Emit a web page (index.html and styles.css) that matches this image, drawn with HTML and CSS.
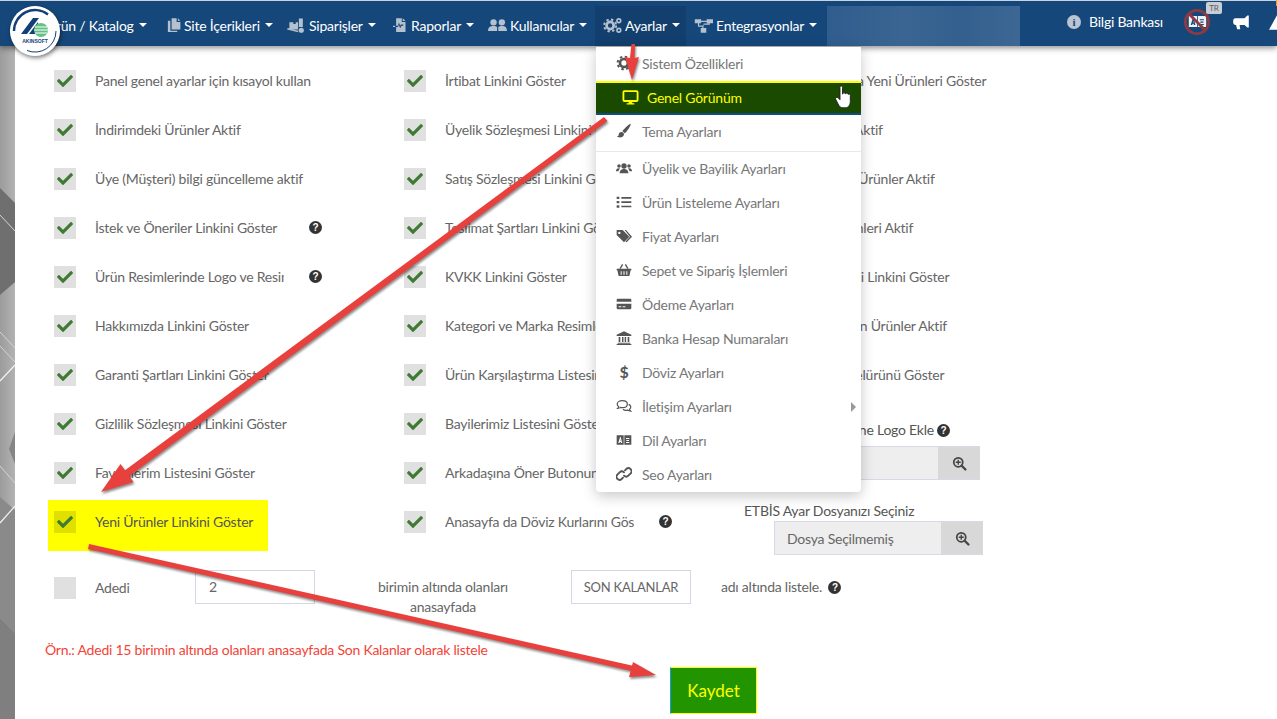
FILE: index.html
```html
<!DOCTYPE html>
<html lang="tr">
<head>
<meta charset="utf-8">
<title>Genel Görünüm</title>
<link rel="stylesheet" href="styles.css">
</head>
<body>
<svg class="defs" width="0" height="0" aria-hidden="true">
  <symbol id="i-check" viewBox="0 0 512 512"><path d="M173.898 439.404l-166.4-166.4c-9.997-9.997-9.997-26.206 0-36.204l36.203-36.204c9.997-9.998 26.207-9.998 36.204 0L192 312.69 432.095 72.596c9.997-9.997 26.207-9.997 36.204 0l36.203 36.204c9.997 9.997 9.997 26.206 0 36.204l-294.4 294.401c-9.998 9.997-26.207 9.997-36.204-.001z"/></symbol>
  <symbol id="i-gear" viewBox="0 0 24 24"><circle cx="12" cy="12" r="6" fill="none" stroke="currentColor" stroke-width="4"/><circle cx="12" cy="12" r="9.5" fill="none" stroke="currentColor" stroke-width="3" stroke-dasharray="3.7 3.76"/></symbol>
  <symbol id="i-gears" viewBox="0 0 24 24"><circle cx="9" cy="12" r="4.5" fill="none" stroke="currentColor" stroke-width="3.4"/><circle cx="9" cy="12" r="7.6" fill="none" stroke="currentColor" stroke-width="2.4" stroke-dasharray="3 3"/><circle cx="20" cy="6" r="2.4" fill="none" stroke="currentColor" stroke-width="2"/><circle cx="20" cy="18" r="2.4" fill="none" stroke="currentColor" stroke-width="2"/></symbol>
  <symbol id="i-monitor" viewBox="0 0 24 24"><rect x="2" y="3" width="20" height="14" rx="1.5" fill="none" stroke="currentColor" stroke-width="2.6"/><path d="M9.5 17h5v3h3v2h-11v-2h3z"/></symbol>
  <symbol id="i-brush" viewBox="0 0 24 24"><path d="M22 1c-2 .2-9 6.500-12.500 11l3.500 3.500C17 12 22.500 4 22 1z"/><path d="M8.500 13.500c-3 0-4.500 2-4.500 4 0 1.500-1 2.500-3 2.500 2 2.500 10.500 3 11-3 0-2-1.500-3.500-3.500-3.500z"/></symbol>
  <symbol id="i-users" viewBox="0 0 24 24"><circle cx="12" cy="9" r="4"/><path d="M5.500 20c0-5 3-6.500 6.500-6.500s6.500 1.500 6.500 6.500z"/><circle cx="4.500" cy="9" r="2.700"/><circle cx="19.500" cy="9" r="2.700"/><path d="M0 17c0-3 1.500-4.500 4-4.500 1 0 1.500.3 2 .6-1.500 1-2 2.500-2.200 3.900zM24 17c0-3-1.500-4.500-4-4.500-1 0-1.500.3-2 .6 1.500 1 2 2.500 2.200 3.900z"/></symbol>
  <symbol id="i-users2" viewBox="0 0 24 24"><circle cx="7" cy="8" r="4"/><circle cx="17.500" cy="8" r="4"/><path d="M0 19c0-5 3-6.500 7-6.500 2 0 3.500.5 4.500 1.500v5zM13 14c1-1 2.500-1.500 4.500-1.500 4 0 6.500 1.500 6.500 6.500H13z"/></symbol>
  <symbol id="i-list" viewBox="0 0 24 24"><path d="M1 4h4v3.500H1zM8 4.500h15V7H8zM1 10.500h4V14H1zM8 11h15v2.500H8zM1 17h4v3.500H1zM8 17.500h15V20H8z"/></symbol>
  <symbol id="i-tags" viewBox="0 0 24 24"><path fill-rule="evenodd" d="M1 3h9l10 10-8 8.500-11-11zM5 5.500a1.800 1.800 0 1 0 .01 0z"/><path d="M13 3h2l9 10-8 8.500-1.800-1.300 6.800-7.200z"/></symbol>
  <symbol id="i-basket" viewBox="0 0 24 24"><path fill-rule="evenodd" d="M1 10h22v2.500h-1L20 21H4L2 12.500H1zM7 14v5h1.500v-5zM11.200 14v5h1.600v-5zM15.500 14v5H17v-5z"/><path d="M5 10l4-7 1.800 1-3.500 6zM19 10l-4-7-1.800 1 3.500 6z"/></symbol>
  <symbol id="i-card" viewBox="0 0 24 24"><path fill-rule="evenodd" d="M3 4h18a2 2 0 0 1 2 2v2.500H1V6a2 2 0 0 1 2-2zM1 11.500h22V18a2 2 0 0 1-2 2H3a2 2 0 0 1-2-2zM4 15.500v1.500h4v-1.500zM10 15.500v1.500h4v-1.500z"/></symbol>
  <symbol id="i-bank" viewBox="0 0 24 24"><path d="M12 2l11 5v2H1V7zM4 10.500h2.500V18H4zM9 10.500h2.200V18H9zM13 10.500h2.200V18H13zM17.500 10.500H20V18h-2.500zM2.500 19h19v1.500h-19zM1 21h22v1.500H1z"/></symbol>
  <symbol id="i-comments" viewBox="0 0 24 24"><g fill="none" stroke="currentColor" stroke-width="1.800"><path d="M9.500 4c4.400 0 7.500 2.200 7.500 5.200s-3.100 5.300-7.500 5.300c-1 0-1.900-.1-2.700-.4-1.200 1-2.800 1.500-4.300 1.500.9-.8 1.400-1.900 1.500-2.900C2.700 11.800 1.800 10.600 1.800 9.200 1.800 6.200 5 4 9.500 4z"/><path d="M19 9.500c2 .8 3.200 2.300 3.200 4 0 1.300-.7 2.500-1.900 3.300.1 1 .6 2 1.500 2.800-1.500 0-3-.5-4.200-1.500-2.600.8-5.500.2-7.100-1.300"/></g></symbol>
  <symbol id="i-lang" viewBox="0 0 24 24"><path fill-rule="evenodd" d="M1 5h10.500v14H1zM6.200 7.500L3.400 16.500h1.900l.5-1.600h1.200l.5 1.600h1.900L7 7.500zM6.100 13.300l.5-2 .5 2z"/><path fill-rule="evenodd" d="M12.500 5H23v14H12.500zM15 9v1.500h5V9zM15.500 12v1.500h4V12zM15 15v1.500h5V15z"/></symbol>
  <symbol id="i-link" viewBox="0 0 24 24"><g fill="none" stroke="currentColor" stroke-width="2.800" stroke-linecap="round"><path d="M13.500 6.500l2-2a4.600 4.600 0 0 1 6.500 6.500l-3.500 3.500a4.600 4.600 0 0 1-6.500 0"/><path d="M10.500 17.500l-2 2A4.600 4.600 0 0 1 2 13l3.500-3.500a4.600 4.600 0 0 1 6.500 0"/></g></symbol>
  <symbol id="i-search" viewBox="0 0 24 24"><circle cx="10" cy="10" r="7.200" fill="none" stroke="currentColor" stroke-width="2.800"/><path d="M15.500 15.500l6 6" stroke="currentColor" stroke-width="3.600" stroke-linecap="round"/><path d="M6 10h8M10 6v8" stroke="currentColor" stroke-width="2.200"/></symbol>
  <symbol id="i-files" viewBox="0 0 24 24"><path d="M9 1h8v6h6v12H9z"/><path d="M19 1l4 4h-4z"/><path d="M7 5v16h11v2H3V5z"/></symbol>
  <symbol id="i-truck" viewBox="0 0 24 24"><path d="M3 8h5v2h3V8h3v9H3z"/><path d="M15 3h5v11h-5zM0 17l1-2 13 3.500v2L0 17z"/><circle cx="18" cy="18" r="3.300"/></symbol>
  <symbol id="i-report" viewBox="0 0 24 24"><path fill-rule="evenodd" d="M5 1h9v6h6v16H5v-8h3l1.500-3 2 5 2-4h3v-2h-4l-1 2-2-5L8 13H5z"/><path d="M15.500 1L20 5.500h-4.500zM0 13h3.500v2H0z"/></symbol>
  <symbol id="i-sitemap" viewBox="0 0 24 24"><path d="M1 4h8v5H1zM16 4h8v5h-8zM8.500 15h7v6h-7zM9 6h7v1.500H9zM5 9h1.500v3H12v3h-1.500v-1.500H5zM12 9.500h6.500V9h1.500v2h-7.500v1.500H12z"/></symbol>
  <symbol id="i-mega" viewBox="0 0 24 24"><path d="M21 2h2v17h-2l-4-3.500H10l1 6H6.500L5 15.500H4a3 3 0 0 1-3-3V9a3 3 0 0 1 3-3h13z"/></symbol>
</svg>

<header class="navbar">
  <div class="logo">
    <svg class="logo-art" viewBox="0 0 50 50">
      <circle cx="25" cy="25" r="24.500" fill="#fff"/>
      <path d="M4 25A21 21 0 0 1 38 8.500" fill="none" stroke="#123f78" stroke-width="2.400"/>
      <path d="M46 25A21 21 0 0 1 17 44.500" fill="none" stroke="#123f78" stroke-width="1"/>
      <path d="M11 28L23 12h6L17 28zM19 28l9-12v12z" fill="#123f78"/>
      <circle cx="31" cy="24" r="7" fill="#63c184"/>
      <path d="M25 21h12M24 24h14M25 27h12" stroke="#fff" stroke-width="1"/>
      <text class="logo-text" x="25" y="37" text-anchor="middle">AKINSOFT</text>
    </svg>
  </div>
  <nav class="menu">
    <div class="menu-item"><span>Ürün / Katalog</span><i class="caret"></i></div>
    <div class="menu-item"><svg class="nav-ico"><use href="#i-files"/></svg><span>Site İçerikleri</span><i class="caret"></i></div>
    <div class="menu-item"><svg class="nav-ico wide"><use href="#i-truck"/></svg><span>Siparişler</span><i class="caret"></i></div>
    <div class="menu-item"><svg class="nav-ico"><use href="#i-report"/></svg><span>Raporlar</span><i class="caret"></i></div>
    <div class="menu-item"><svg class="nav-ico wide"><use href="#i-users2"/></svg><span>Kullanıcılar</span><i class="caret"></i></div>
    <div class="menu-item active"><svg class="nav-ico wide"><use href="#i-gears"/></svg><span>Ayarlar</span><i class="caret"></i>
      <div class="dropdown">
        <a class="dd-item"><svg class="dd-ico"><use href="#i-gear"/></svg>Sistem Özellikleri</a>
        <a class="dd-item current"><svg class="dd-ico"><use href="#i-monitor"/></svg>Genel Görünüm
          <svg class="hand" viewBox="0 0 16 24"><path d="M5 2.200c0-1.600 2.500-1.600 2.500 0V9l.5-.2c0-1.500 2.300-1.500 2.300 0l.4.200c.2-1.300 2.200-1.200 2.300.2l.3.300c.4-.8 2-.4 2 .8v6c0 3-1.500 6.500-5 6.500H8c-3 0-3.500-1.500-5-4L.8 14.500c-.8-1.500 1-3 2.500-1.500L5 14.800z" fill="#fff" stroke="#222" stroke-width=".9"/></svg>
        </a>
        <a class="dd-item"><svg class="dd-ico"><use href="#i-brush"/></svg>Tema Ayarları</a>
        <div class="dd-divider"></div>
        <a class="dd-item"><svg class="dd-ico"><use href="#i-users"/></svg>Üyelik ve Bayilik Ayarları</a>
        <a class="dd-item"><svg class="dd-ico"><use href="#i-list"/></svg>Ürün Listeleme Ayarları</a>
        <a class="dd-item"><svg class="dd-ico"><use href="#i-tags"/></svg>Fiyat Ayarları</a>
        <a class="dd-item"><svg class="dd-ico"><use href="#i-basket"/></svg>Sepet ve Sipariş İşlemleri</a>
        <a class="dd-item"><svg class="dd-ico"><use href="#i-card"/></svg>Ödeme Ayarları</a>
        <a class="dd-item"><svg class="dd-ico"><use href="#i-bank"/></svg>Banka Hesap Numaraları</a>
        <a class="dd-item"><b class="dd-ico dollar">$</b>Döviz Ayarları</a>
        <a class="dd-item has-sub"><svg class="dd-ico"><use href="#i-comments"/></svg>İletişim Ayarları<i class="sub-caret"></i></a>
        <a class="dd-item"><svg class="dd-ico"><use href="#i-lang"/></svg>Dil Ayarları</a>
        <a class="dd-item"><svg class="dd-ico"><use href="#i-link"/></svg>Seo Ayarları</a>
      </div>
    </div>
    <div class="menu-item"><svg class="nav-ico wide"><use href="#i-sitemap"/></svg><span>Entegrasyonlar</span><i class="caret"></i></div>
    <div class="blurred"></div>
  </nav>
  <div class="nav-right">
    <span class="info-dot">i</span><span class="kb">Bilgi Bankası</span>
    <div class="lang-off">
      <svg class="lang-ico"><use href="#i-lang"/></svg>
      <svg class="lang-ban" viewBox="0 0 30 30"><circle cx="15" cy="15" r="12.500" fill="none" stroke="#8c3b42" stroke-width="3"/><path d="M6 6l18 18" stroke="#8c3b42" stroke-width="3"/></svg>
      <span class="tr-badge">TR</span>
    </div>
    <svg class="mega"><use href="#i-mega"/></svg>
    <div class="warn"><svg class="warn-ico" viewBox="0 0 20 18"><path d="M10 0l10 18H0z" fill="#fff"/></svg></div>
  </div>
</header>

<div class="page">
  <aside class="strip">
    <svg class="strip-art" viewBox="0 46 15 673" preserveAspectRatio="none">
      <polygon points="0,188 15,203 15,282 0,295" fill="#6f6f6f"/>
      <polygon points="0,497 15,510 15,633 0,618" fill="#8a8a8a"/>
      <polygon points="0,618 15,633 15,719 0,719" fill="#7f7f7f"/>
      <polygon points="15,432 9,449 15,464" fill="#858585"/>
      <path d="M0 215L15 231M0 332L15 348M0 346L15 362M0 466L15 483" stroke="#d4d4d4" stroke-width="1"/>
      <path d="M0 381L15 365M0 523L15 506" stroke="#f2f2f2" stroke-width="1.200"/>
    </svg>
  </aside>
  <main class="panel">
    <div class="columns">
      <section class="col">
        <div class="row"><span class="cb on"><svg><use href="#i-check"/></svg></span><label>Panel genel ayarlar için kısayol kullan</label></div>
        <div class="row"><span class="cb on"><svg><use href="#i-check"/></svg></span><label>İndirimdeki Ürünler Aktif</label></div>
        <div class="row"><span class="cb on"><svg><use href="#i-check"/></svg></span><label>Üye (Müşteri) bilgi güncelleme aktif</label></div>
        <div class="row"><span class="cb on"><svg><use href="#i-check"/></svg></span><label class="clip">İstek ve Öneriler Linkini Göster</label><span class="help">?</span></div>
        <div class="row"><span class="cb on"><svg><use href="#i-check"/></svg></span><label class="clip">Ürün Resimlerinde Logo ve Resim Ekle</label><span class="help">?</span></div>
        <div class="row"><span class="cb on"><svg><use href="#i-check"/></svg></span><label>Hakkımızda Linkini Göster</label></div>
        <div class="row"><span class="cb on"><svg><use href="#i-check"/></svg></span><label>Garanti Şartları Linkini Göster</label></div>
        <div class="row"><span class="cb on"><svg><use href="#i-check"/></svg></span><label>Gizlilik Sözleşmesi Linkini Göster</label></div>
        <div class="row"><span class="cb on"><svg><use href="#i-check"/></svg></span><label>Favorilerim Listesini Göster</label></div>
        <div class="row marked"><span class="cb on"><svg><use href="#i-check"/></svg></span><label>Yeni Ürünler Linkini Göster</label></div>
      </section>
      <section class="col">
        <div class="row"><span class="cb on"><svg><use href="#i-check"/></svg></span><label>İrtibat Linkini Göster</label></div>
        <div class="row"><span class="cb on"><svg><use href="#i-check"/></svg></span><label>Üyelik Sözleşmesi Linkini Göster</label></div>
        <div class="row"><span class="cb on"><svg><use href="#i-check"/></svg></span><label>Satış Sözleşmesi Linkini Göster</label></div>
        <div class="row"><span class="cb on"><svg><use href="#i-check"/></svg></span><label>Teslimat Şartları Linkini Göster</label></div>
        <div class="row"><span class="cb on"><svg><use href="#i-check"/></svg></span><label>KVKK Linkini Göster</label></div>
        <div class="row"><span class="cb on"><svg><use href="#i-check"/></svg></span><label>Kategori ve Marka Resimleri Göster</label></div>
        <div class="row"><span class="cb on"><svg><use href="#i-check"/></svg></span><label>Ürün Karşılaştırma Listesini Göster</label></div>
        <div class="row"><span class="cb on"><svg><use href="#i-check"/></svg></span><label>Bayilerimiz Listesini Göster</label></div>
        <div class="row"><span class="cb on"><svg><use href="#i-check"/></svg></span><label>Arkadaşına Öner Butonunu Göster</label></div>
        <div class="row"><span class="cb on"><svg><use href="#i-check"/></svg></span><label class="clip">Anasayfa da Döviz Kurlarını Göster</label><span class="help">?</span></div>
      </section>
      <section class="col third">
        <div class="row"><label>Anasayfada Yeni Ürünleri Göster</label></div>
        <div class="row"><label>Yorumları Aktif</label></div>
        <div class="row"><label>Çok Satan Ürünler Aktif</label></div>
        <div class="row"><label>Kargo Ürünleri Aktif</label></div>
        <div class="row"><label>Ödeme Tipi Linkini Göster</label></div>
        <div class="row"><label>Yeni Gezilen Ürünler Aktif</label></div>
        <div class="row"><label>Günün Özelürünü Göster</label></div>
        <div class="file-title right">Resimlere Üzerine Logo Ekle <span class="help tight">?</span></div>
        <div class="file first"><span class="file-name"></span><span class="file-btn"><svg><use href="#i-search"/></svg></span></div>
        <div class="file-title etbis">ETBİS Ayar Dosyanızı Seçiniz</div>
        <div class="file second"><span class="file-name">Dosya Seçilmemiş</span><span class="file-btn"><svg><use href="#i-search"/></svg></span></div>
      </section>
    </div>
    <div class="stock-row">
      <span class="cb"></span>
      <label class="adedi">Adedi</label>
      <span class="box num">2</span>
      <span class="under">birimin altında olanları<br>anasayfada</span>
      <span class="box name">SON KALANLAR</span>
      <span class="after">adı altında listele. <span class="help tight">?</span></span>
    </div>
    <p class="note">Örn.: Adedi 15 birimin altında olanları anasayfada Son Kalanlar olarak listele</p>
    <button class="save">Kaydet</button>
  </main>
</div>

<svg class="arrows" viewBox="0 0 1277 719">
  <polygon points="631.500,44 635,44 634.500,58 639,57 632,80 625,57 630,58"/>
  <polygon points="604,117 607.500,121 128,477 124,471"/>
  <polygon points="101,492 120.500,464 133.500,482"/>
  <polygon points="89,544 88,549 632,671 634,666"/>
  <polygon points="656,675 633,662 629,677"/>
</svg>
</body>
</html>
```
FILE: styles.css
```css
* { box-sizing: border-box; }
html, body { margin: 0; height: 719px; overflow: hidden; }
body { font-family: "Lato", "Open Sans", sans-serif; font-size: 14px; letter-spacing: -.23px; color: #666; background: #fff; position: relative; }
.defs { position: absolute; }

/* navbar */
.navbar { height: 46px; background: #16477a; border-top: 1px solid #c9d3de; display: flex; position: relative; z-index: 5; box-shadow: 0 2px 6px rgba(0,0,0,.45); color: #fff; }
.logo { position: absolute; left: 10px; top: 5px; width: 50px; height: 50px; border-radius: 50%; box-shadow: 1px 2px 4px rgba(0,0,0,.5); z-index: 3; background: #fff; }
.logo-art { width: 50px; height: 50px; display: block; }
.logo-text { font: bold 5px "Liberation Sans", sans-serif; letter-spacing: 0; fill: #123f78; }
.menu { display: grid; grid-template-columns: 120px 121px 106px 95px 115px 91px 141px 193px; margin-left: 38px; padding-top: 5px; height: 45px; }
.menu-item { display: flex; align-items: center; justify-content: flex-start; padding: 0 0 2px 8px; gap: 3px; white-space: nowrap; position: relative; font-size: 14px; }
.menu-item.active { background: #123f6e; }
.nav-ico { width: 15px; height: 16px; fill: #b4c1cf; color: #b4c1cf; flex: none; }
.nav-ico.wide { width: 19px; height: 19px; }
.caret { width: 0; height: 0; border-left: 4px solid transparent; border-right: 4px solid transparent; border-top: 4px solid #fff; margin-left: 2px; }
.blurred { background: linear-gradient(90deg, #2f5d8e, #3a6592 40%, #33608f 70%, #3d6794); }

.nav-right { display: flex; align-items: flex-start; margin-left: 47px; padding-top: 13px; position: relative; flex: 1; }
.info-dot { width: 14px; height: 14px; border-radius: 50%; background: #b9c5d2; color: #16477a; font: bold 11px/14px "Liberation Serif", serif; text-align: center; margin-top: 1px; flex: none; }
.kb { margin: -1px 0 0 8px; line-height: 17px; white-space: nowrap; }
.lang-off { position: relative; width: 30px; height: 26px; margin-left: 19px; margin-top: -6px; flex: none; }
.lang-ico { position: absolute; left: 6px; top: 4px; width: 19px; height: 19px; fill: #eef2f6; }
.lang-ban { position: absolute; left: 0; top: 0; width: 30px; height: 28px; }
.tr-badge { position: absolute; left: 24px; top: -6px; width: 16px; height: 12px; border-radius: 2px; background: #c9ced4; color: #55606b; font-size: 8px; letter-spacing: 0; line-height: 12px; text-align: center; }
.mega { width: 18px; height: 17px; fill: #fff; margin-left: 20px; flex: none; }
.warn { margin-left: 19px; position: relative; width: 12px; height: 20px; flex: none; }
.warn-ico { width: 16px; height: 15px; display: block; position: absolute; left: 0; top: 1px; }
.warn::before { content: ""; position: absolute; left: 7px; top: -14px; width: 4px; height: 6px; background: #f39c12; }

/* dropdown */
.dropdown { position: absolute; left: 1px; top: 41px; width: 265px; height: 445px; background: #fff; border-radius: 0 0 4px 4px; box-shadow: 0 4px 14px rgba(0,0,0,.22); color: #777; z-index: 6; }
.dd-item { display: flex; align-items: center; height: 34px; padding: 0 0 2px 20px; position: relative; }
.dd-ico { width: 16px; height: 16px; margin-right: 10px; fill: #555; color: #555; flex: none; }
.dollar { color: #555; font-size: 16px; text-align: center; line-height: 16px; }
.dd-item.current { background: #1a4a00; color: #ffff00; border-top: 2px solid #ffff00; border-bottom: 2px solid #0f4d82; padding: 0 0 2px 26px; }
.dd-item.current .dd-ico { fill: #ffff00; color: #ffff00; width: 17px; height: 17px; margin-right: 8px; }
.hand { position: absolute; left: 239px; top: 2px; width: 16px; height: 24px; }
.dd-divider { height: 3px; border-bottom: 1px solid #e8e8e8; }
.sub-caret { position: absolute; left: 255px; top: 12px; border-left: 5px solid #999; border-top: 5px solid transparent; border-bottom: 5px solid transparent; }

/* page */
.page { display: flex; height: 673px; }
.strip { width: 15px; background: linear-gradient(90deg, #9c9c9c, #b2b2b2); flex: none; }
.strip-art { width: 15px; height: 673px; display: block; }
.panel { flex: 1; background: #fff; min-width: 0; }
.columns { display: flex; padding: 11px 0 0 39px; }
.col { width: 350px; flex: none; }
.col.third { padding-left: 30px; width: auto; margin-left: -10px; }
.row { height: 49px; padding-bottom: 1px; display: flex; align-items: center; white-space: nowrap; }
.third .row { padding-left: 21px; }
.row label { display: block; margin-bottom: 2px; }
.cb { width: 22px; height: 22px; background: rgba(0,0,0,.12); display: flex; align-items: center; justify-content: center; margin-right: 19px; flex: none; }
.cb svg { width: 16px; height: 16px; fill: #3f7a33; }
label.clip { width: 189px; overflow: hidden; flex: none; }
.help { display: inline-block; width: 13px; height: 13px; border-radius: 50%; background: #333; color: #fff; font: bold 10px/13px "Liberation Sans", sans-serif; letter-spacing: 0; text-align: center; margin-left: 25px; flex: none; margin-top: -2px; }
.help.tight { margin-left: 3px; vertical-align: 1px; margin-top: 0; }
.row.marked { background: #ffff00; margin: 2px 0 -4px -6px; padding: 0 0 7px 6px; width: 220px; height: 51px; color: #555; }

/* files */
.file-title { color: #555; line-height: 20px; white-space: nowrap; }
.file-title.right { margin: 20px 0 6px; width: 176px; display: flex; justify-content: flex-end; align-items: center; }
.file-title.etbis { margin: 21px 0 0 -30px; }
.file { display: flex; height: 34px; background: #eee; border: 1px solid #d8d8e6; border-right: 0; }
.file.first { width: 206px; }
.file.second { width: 209px; }
.file-name { flex: 1; padding-left: 12px; line-height: 34px; }
.file-btn { width: 42px; background: #d8d8d8; display: flex; align-items: center; justify-content: center; }
.file-btn svg { width: 15px; height: 15px; fill: #444; color: #444; }

/* stock row */
.stock-row { display: flex; align-items: flex-start; margin-top: 15px; padding-left: 39px; }
.stock-row .cb { margin-top: 7px; }
.adedi { width: 100px; margin-top: 8px; line-height: 20px; }
.box { width: 120px; height: 34px; border: 1px solid #d5d5e3; line-height: 32px; flex: none; }
.box.num { padding-left: 13px; }
.box.name { text-align: center; font-size: 13px; }
.under { width: 256px; text-align: center; line-height: 20px; padding-top: 7px; }
.after { margin-left: 30px; padding-top: 7px; line-height: 20px; white-space: nowrap; }

.note { margin: 23px 0 7px 30px; line-height: 20px; color: #f44336; }
.save { display: block; margin-left: 655px; width: 87px; height: 47px; background: #229400; color: #ffff00; font: 17px "Lato", sans-serif; border: 1px solid #ffff00; border-left-color: #11a0e0; padding: 0; }

.arrows { position: absolute; left: 0; top: 0; width: 1277px; height: 719px; fill: #e8403c; z-index: 10; filter: drop-shadow(1px 2px 1px rgba(0,0,0,.45)); pointer-events: none; }
```
